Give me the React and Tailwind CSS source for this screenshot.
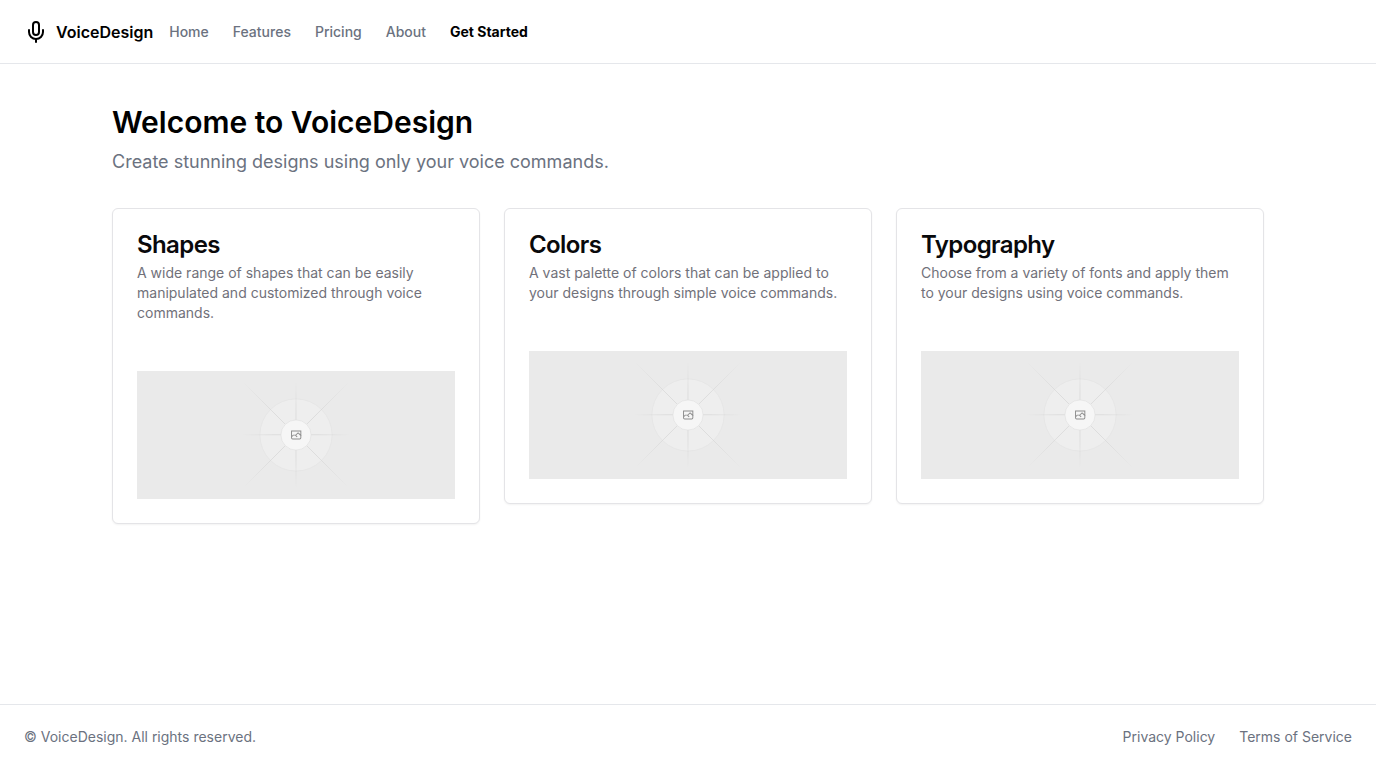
import React from "react";
import { Mic } from "lucide-react";

const navLinks = ["Home", "Features", "Pricing", "About"];

const features = [
  {
    title: "Shapes",
    text: "A wide range of shapes that can be easily manipulated and customized through voice commands.",
  },
  {
    title: "Colors",
    text: "A vast palette of colors that can be applied to your designs through simple voice commands.",
  },
  {
    title: "Typography",
    text: "Choose from a variety of fonts and apply them to your designs using voice commands.",
  },
];

function Placeholder({ id, label }) {
  const near = `${id}-near`;
  const far = `${id}-far`;
  return (
    <svg
      role="img"
      aria-label={label}
      viewBox="0 0 1200 1200"
      preserveAspectRatio="xMidYMid slice"
      className="block h-32 w-full"
      fill="none"
    >
      <defs>
        <radialGradient id={near} gradientUnits="userSpaceOnUse" cx="600" cy="600" r="200">
          <stop offset="0.4" stopColor="#C9C9C9" />
          <stop offset="1" stopColor="#C9C9C9" stopOpacity="0" />
        </radialGradient>
        <radialGradient id={far} gradientUnits="userSpaceOnUse" cx="600" cy="600" r="280">
          <stop offset="0.4" stopColor="#C9C9C9" />
          <stop offset="1" stopColor="#C9C9C9" stopOpacity="0" />
        </radialGradient>
      </defs>
      <rect width="1200" height="1200" fill="#EAEAEA" />
      <circle cx="600" cy="600" r="136" fill="#FAFAFA" stroke="#D4D4D4" strokeWidth="2.4" opacity="0.3" />
      <g strokeWidth="2.8" opacity="0.6">
        <path stroke={`url(#${near})`} d="M400 599H800M600 400V800" />
        <path stroke={`url(#${far})`} d="M400 400L800 800M800 400L400 800" />
      </g>
      <circle cx="600" cy="600" r="57" fill="#F6F6F6" stroke="#E0E0E0" strokeWidth="2.4" />
      <path
        fill="#8C8C8C"
        fillRule="evenodd"
        clipRule="evenodd"
        d="M616.426 586.58h-31.434v16.176l3.553-3.554.531-.531h9.068l.074-.074 8.463-8.463h2.565l7.18 7.181V586.58Zm-15.715 14.654 3.698 3.699 1.283 1.282-2.565 2.565-1.282-1.283-5.2-5.199h-6.066l-5.514 5.514-.073.073v2.876a2.418 2.418 0 0 0 2.418 2.418h26.598a2.418 2.418 0 0 0 2.418-2.418v-8.317l-8.463-8.463-7.181 7.181-.071.072Zm-19.347 5.442v4.085a6.045 6.045 0 0 0 6.046 6.045h26.598a6.044 6.044 0 0 0 6.045-6.045v-7.108l1.356-1.355-1.282-1.283-.074-.073v-17.989h-38.689v23.43l-.146.146.146.147Z"
      />
    </svg>
  );
}

function FeatureCard({ title, text }) {
  return (
    <article className="rounded-md border border-[#e4e4e7] bg-white shadow-xs">
      <div className="flex flex-col gap-1.5 p-6">
        <h2 className="text-2xl leading-6 font-semibold tracking-tight text-[#09090b]">{title}</h2>
        <p className="text-sm text-[#71717a]">{text}</p>
      </div>
      <div className="p-6">
        <Placeholder id={title} label={title} />
      </div>
    </article>
  );
}

export default function App() {
  return (
    <div className="flex min-h-screen flex-col bg-white font-['Inter',sans-serif] text-black">
      <header className="flex h-16 items-center gap-4 border-b border-gray-200 px-6">
        <a href="#" className="flex items-center gap-2 font-semibold">
          <Mic className="size-6" aria-hidden="true" />
          VoiceDesign
        </a>
        <nav className="flex items-center gap-6 text-sm font-medium">
          {navLinks.map((name) => (
            <a key={name} href="#" className="text-[#6b7280]">
              {name}
            </a>
          ))}
          <a href="#" className="font-bold">
            Get Started
          </a>
        </nav>
      </header>
      <main className="flex-1 px-6 py-10">
        <div className="mx-auto max-w-6xl">
          <h1 className="mb-2 text-3xl font-semibold">Welcome to VoiceDesign</h1>
          <p className="mb-8 text-lg text-[#6b7280]">
            Create stunning designs using only your voice commands.
          </p>
          <div className="grid items-start gap-6 md:grid-cols-3">
            {features.map((f) => (
              <FeatureCard key={f.title} {...f} />
            ))}
          </div>
        </div>
      </main>
      <footer className="flex h-16 items-center justify-between border-t border-gray-200 px-6 text-sm text-[#6b7280]">
        <p>© VoiceDesign. All rights reserved.</p>
        <nav className="flex gap-6">
          <a href="#">Privacy Policy</a>
          <a href="#">Terms of Service</a>
        </nav>
      </footer>
    </div>
  );
}
